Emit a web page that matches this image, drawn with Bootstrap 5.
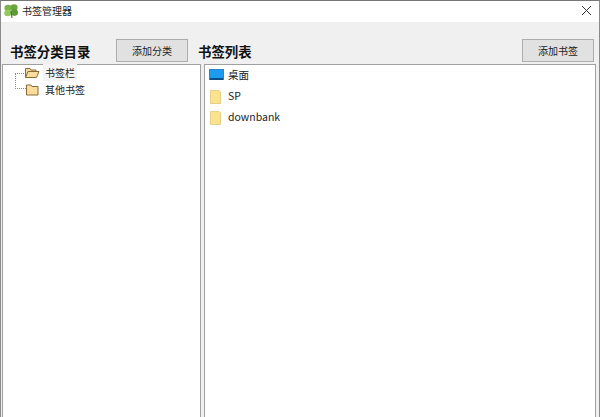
<!DOCTYPE html>
<html lang="zh">
<head>
<meta charset="utf-8">
<link href="https://cdn.jsdelivr.net/npm/bootstrap@5.3.0/dist/css/bootstrap.min.css" rel="stylesheet">
<style>
html,body{height:417px;overflow:hidden;background:#f0f0f0;}
body{font-family:"Noto Sans CJK SC","Noto Sans",sans-serif;font-size:10px;color:#222;}
.win{height:417px;border-left:1px solid #8a8a8a;border-right:1px solid #8a8a8a;border-top:1px solid #777;}
.titlebar{height:21px;background:#fff;padding-left:2px;padding-bottom:2px;gap:2px;font-size:10px;}
.closex{margin-left:auto;margin-right:7px;}
.heads{height:42px;}
.headcol{padding-top:17px;}
.lefthead{width:199px;padding-left:9px;padding-right:12px;}
.righthead{flex:1;padding-right:5px;margin-left:-2px;}
.htitle{font-size:13.4px;font-weight:700;line-height:16px;color:#111;padding-top:4px;}
.addbtn{width:72px;height:23px;background:#e1e1e1;border:1px solid #adadad;border-radius:0;font-size:10px;line-height:21px;padding:0;text-align:center;color:#222;}
.panes{height:353px;padding-left:1px;gap:3px;}
.pane{background:#fff;border:1px solid #a0a0a0;border-bottom:0;height:100%;position:relative;}
.lpane{width:199px;}
.rpane{width:392px;}
.treerow{height:17px;line-height:17px;padding-left:21px;}
.treerow svg{flex:none;}
.treewrap{margin-top:-1px;}
.tlabel{padding:0 2px;margin-left:3px;}
.sel{background:#f4f4f4;}
.tline{position:absolute;left:12px;top:8px;width:11px;height:16px;border-left:1px dotted #888;border-top:1px dotted #888;border-bottom:1px dotted #888;}
.rowwrap{margin-top:-1px;}
.lrow{height:21px;padding-left:4px;gap:3px;font-size:10.5px;}
</style>
</head>
<body>
<div class="win d-flex flex-column">
  <div class="titlebar d-flex align-items-center">
    <svg width="17" height="16" viewBox="0 0 17 16"><ellipse cx="5" cy="5" rx="3.6" ry="3.3" fill="#7cb648"/><ellipse cx="11" cy="4.6" rx="3.6" ry="3.3" fill="#6aa63c"/><ellipse cx="4.8" cy="10" rx="3.6" ry="3.3" fill="#93c95e"/><ellipse cx="11.4" cy="9.6" rx="3.6" ry="3.3" fill="#5e9a35"/><path d="M8 8L9 15" stroke="#4d7a30" stroke-width="1.2"/></svg>
    <span>书签管理器</span>
    <svg class="closex" width="11" height="11" viewBox="0 0 11 11"><path d="M1 1L10 10M10 1L1 10" stroke="#333" stroke-width="1"/></svg>
  </div>
  <div class="heads d-flex">
    <div class="headcol lefthead d-flex justify-content-between">
      <div class="htitle">书签分类目录</div>
      <button class="addbtn" type="button">添加分类</button>
    </div>
    <div class="headcol righthead d-flex justify-content-between">
      <div class="htitle">书签列表</div>
      <button class="addbtn" type="button">添加书签</button>
    </div>
  </div>
  <div class="panes d-flex">
    <div class="pane lpane">
      <div class="tline"></div>
      <div class="treewrap">
        <div class="treerow d-flex align-items-center">
          <svg width="16" height="13" viewBox="0 0 16 13"><path d="M1.5 11.5V2.5H6L7 4H12V5.5" fill="#f5d9a0" stroke="#8a6a36"/><path d="M1.5 11.5L4 5.5H15L12.5 11.5Z" fill="#f9dc9f" stroke="#8a6a36"/></svg>
          <span class="tlabel sel">书签栏</span>
        </div>
        <div class="treerow d-flex align-items-center">
          <svg width="16" height="13" viewBox="0 0 16 13"><path d="M2.5 12V2H7L8 3.5H14V12Z" fill="#fbdc9c" stroke="#8a6a36"/></svg>
          <span class="tlabel">其他书签</span>
        </div>
      </div>
    </div>
    <div class="pane rpane">
      <div class="rowwrap">
        <div class="lrow d-flex align-items-center">
          <svg width="16" height="12" viewBox="0 0 16 12"><rect x="0.5" y="0.5" width="14" height="10" fill="#1d9bf0" stroke="#2b86c9"/><rect x="1" y="9" width="13" height="2" fill="#0c4f86"/></svg>
          <span>桌面</span>
        </div>
        <div class="lrow d-flex align-items-center">
          <svg width="16" height="16" viewBox="0 0 16 16"><path d="M1.5 2.5H10L11.5 4V15.5H1.5Z" fill="#fbe38e" stroke="#e6cf88"/></svg>
          <span>SP</span>
        </div>
        <div class="lrow d-flex align-items-center">
          <svg width="16" height="16" viewBox="0 0 16 16"><path d="M1.5 2.5H10L11.5 4V15.5H1.5Z" fill="#fbe38e" stroke="#e6cf88"/></svg>
          <span>downbank</span>
        </div>
      </div>
    </div>
  </div>
</div>
</body>
</html>
